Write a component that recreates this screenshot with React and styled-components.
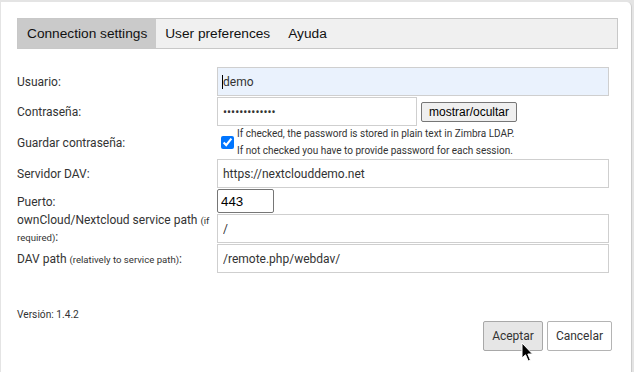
import React from 'react';
import styled, { createGlobalStyle } from 'styled-components';

const GlobalStyle = createGlobalStyle`
      html, body {
            margin: 0;
            padding: 0;
            background: #e4e4e4;
      }
`;

const Window = styled.div`
      position: relative;
      box-sizing: border-box;
      margin: 2px 0 0 1px;
      width: 631px;
      height: 370px;
      padding: 16px 0 0 16px;
      background: #fff;
      border-right: 1px solid #cbcbcb;
      border-top-right-radius: 5px;
      font-family: Roboto, "Liberation Sans", sans-serif;
      color: #333;
`;

const TabBar = styled.div`
      display: flex;
      box-sizing: border-box;
      width: 601px;
      height: 31px;
      border: 1px solid #c8c8c8;
      background: #f0f0f0;
`;

const Tab = styled.div`
      display: flex;
      align-items: center;
      padding: 0 9px;
      font-family: "Liberation Sans", Arial, sans-serif;
      font-size: 13.7px;
      color: #111;
      background: ${p => (p.$active ? '#cacaca' : 'transparent')};
`;

const Form = styled.div`
      display: grid;
      grid-template-columns: 200px 392px;
      row-gap: 1px;
      margin-top: 18px;
`;

const Label = styled.div`
      display: flex;
      align-items: center;
      height: ${p => p.$h || 29}px;
      margin-right: -14px;
      padding-top: 1px;
      box-sizing: border-box;
      font-size: 12px;
      line-height: 16px;
      color: #333;
`;

const Note = styled.span`
      font-size: 9.6px;
`;

const Field = styled.div`
      position: relative;
      display: flex;
      align-items: center;
      height: ${p => p.$h || 29}px;
`;

const TextInput = styled.input`
      box-sizing: border-box;
      width: ${p => p.$w || 392}px;
      height: 29px;
      margin: 0;
      padding: 0 5px;
      border: 1px solid #cfcfcf;
      border-radius: 0;
      outline: none;
      background: ${p => (p.$filled ? '#eaf2fd' : '#fff')};
      font-family: Roboto, "Liberation Sans", sans-serif;
      font-size: 12px;
      color: #333;
`;

const Caret = styled.span`
      position: absolute;
      left: 5px;
      top: 8px;
      width: 1px;
      height: 14px;
      background: #000;
`;

const PortInput = styled.input`
      box-sizing: border-box;
      width: 57px;
      height: 24px;
      margin: 0;
      padding: 1px 3px;
      border: 1px solid #767676;
      border-radius: 2px;
      outline: none;
      font-family: "Liberation Sans", Arial, sans-serif;
      font-size: 13.33px;
      color: #000;
`;

const SmallButton = styled.button`
      box-sizing: border-box;
      height: 20px;
      margin-left: 4px;
      padding: 0 7px;
      border: 1px solid #767676;
      border-radius: 2px;
      background: #efefef;
      font-family: "Liberation Sans", Arial, sans-serif;
      font-size: 12px;
      color: #000;
`;

const CheckWrap = styled.label`
      display: flex;
      align-items: center;
      height: 31px;
`;

const Check = styled.input`
      width: 13px;
      height: 13px;
      margin: 0 3px 0 4px;
      accent-color: #0075ff;
`;

const CheckText = styled.div`
      font-size: 10px;
      line-height: 16.5px;
      color: #333;
`;

const Version = styled.div`
      margin-top: 36px;
      font-size: 10.2px;
      line-height: 12px;
      color: #333;
`;

const Footer = styled.div`
      display: flex;
      justify-content: flex-end;
      gap: 4px;
      width: 595px;
`;

const DialogButton = styled.button`
      box-sizing: border-box;
      height: 30px;
      padding: 0 8px;
      border: 1px solid ${p => (p.$hover ? '#a8a8a8' : '#b4b4b4')};
      border-radius: 2px;
      background: ${p => (p.$hover ? '#e6e6e6' : '#fff')};
      font-family: Roboto, "Liberation Sans", sans-serif;
      font-size: 12px;
      color: #333;
`;

const Pointer = styled.svg`
      position: absolute;
      left: 520px;
      top: 340px;
`;

const App = () => {
      return (
            <>
                  <GlobalStyle />
                  <Window>
                        <TabBar>
                              <Tab $active>Connection settings</Tab>
                              <Tab>User preferences</Tab>
                              <Tab>Ayuda</Tab>
                        </TabBar>
                        <Form>
                              <Label>Usuario:</Label>
                              <Field>
                                    <TextInput $filled defaultValue="demo" />
                                    <Caret />
                              </Field>

                              <Label>Contraseña:</Label>
                              <Field>
                                    <TextInput $w={200} type="password" defaultValue="nextclouddemo" />
                                    <SmallButton>mostrar/ocultar</SmallButton>
                              </Field>

                              <Label $h={31}>Guardar contraseña:</Label>
                              <CheckWrap>
                                    <Check type="checkbox" defaultChecked />
                                    <CheckText>
                                          If checked, the password is stored in plain text in Zimbra LDAP.<br />
                                          If not checked you have to provide password for each session.
                                    </CheckText>
                              </CheckWrap>

                              <Label>Servidor DAV:</Label>
                              <Field>
                                    <TextInput defaultValue="https://nextclouddemo.net" />
                              </Field>

                              <Label $h={24}>Puerto:</Label>
                              <Field $h={24}>
                                    <PortInput defaultValue="443" />
                              </Field>

                              <Label>
                                    <span>ownCloud/Nextcloud service path <Note>(if required)</Note>:</span>
                              </Label>
                              <Field>
                                    <TextInput defaultValue="/" />
                              </Field>

                              <Label>
                                    <span>DAV path <Note>(relatively to service path)</Note>:</span>
                              </Label>
                              <Field>
                                    <TextInput defaultValue="/remote.php/webdav/" />
                              </Field>
                        </Form>
                        <Version>Versión: 1.4.2</Version>
                        <Footer>
                              <DialogButton $hover>Aceptar</DialogButton>
                              <DialogButton>Cancelar</DialogButton>
                        </Footer>
                        <Pointer width="14" height="21" viewBox="0 0 14 21">
                              <path d="M1 1 L1 16 L4.5 12.8 L7.2 19 L9.4 18 L6.8 12 L11.5 12 Z" fill="#000" stroke="#fff" strokeWidth="1" strokeLinejoin="round" />
                        </Pointer>
                  </Window>
            </>
      );
};

export default App;
